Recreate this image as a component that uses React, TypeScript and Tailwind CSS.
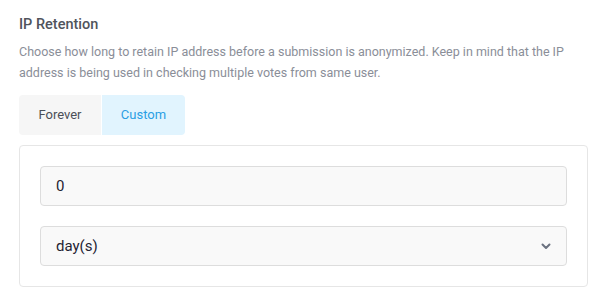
import React from 'react';

const App: React.FC = () => {
  const [mode, setMode] = React.useState<'forever' | 'custom'>('custom');
  const [value, setValue] = React.useState('0');

  return (
    <div className="w-[610px] h-[305px] bg-white pl-[19px] pr-[22px] pt-[14px] font-['Roboto',sans-serif]">
      <h3 className="text-[14.5px] leading-[22px] font-medium text-[#50545c]">IP Retention</h3>
      <p className="mt-[5px] text-[12.5px] leading-[21px] text-[#8a8e98]">
        Choose how long to retain IP address before a submission is anonymized. Keep in mind that the IP
        address is being used in checking multiple votes from same user.
      </p>

      <div className="mt-[12px] flex gap-px">
        <button
          onClick={() => setMode('forever')}
          className={
            mode === 'forever'
              ? 'h-10 w-[82px] rounded-l bg-[#e1f4fe] text-[13px] text-[#2a9fe4]'
              : 'h-10 w-[82px] rounded-l bg-[#f6f6f6] text-[13px] text-[#4b4f58]'
          }
        >
          Forever
        </button>
        <button
          onClick={() => setMode('custom')}
          className={
            mode === 'custom'
              ? 'h-10 w-[83px] rounded-r bg-[#e1f4fe] text-[13px] text-[#2a9fe4]'
              : 'h-10 w-[83px] rounded-r bg-[#f6f6f6] text-[13px] text-[#4b4f58]'
          }
        >
          Custom
        </button>
      </div>

      <div className="mt-[10px] flex flex-col gap-5 rounded border border-[#e6e6e6] p-5">
        <input
          value={value}
          onChange={(e) => setValue(e.target.value)}
          className="h-10 w-full rounded border border-[#dddddd] bg-[#f9f9f9] px-[15px] text-[15px] text-[#1f2433] outline-none"
        />
        <div className="relative">
          <select className="h-10 w-full appearance-none rounded border border-[#dddddd] bg-[#f9f9f9] px-[15px] text-[15px] text-[#1f2433] outline-none">
            <option>day(s)</option>
            <option>week(s)</option>
            <option>month(s)</option>
          </select>
          <svg
            className="pointer-events-none absolute right-[15px] top-1/2 h-3 w-3 -translate-y-1/2 text-[#6b7280]"
            viewBox="0 0 24 24"
            fill="none"
            stroke="currentColor"
            strokeWidth={4}
            strokeLinecap="round"
            strokeLinejoin="round"
          >
            <path d="M5 9l7 7 7-7" />
          </svg>
        </div>
      </div>
    </div>
  );
};

export default App;
